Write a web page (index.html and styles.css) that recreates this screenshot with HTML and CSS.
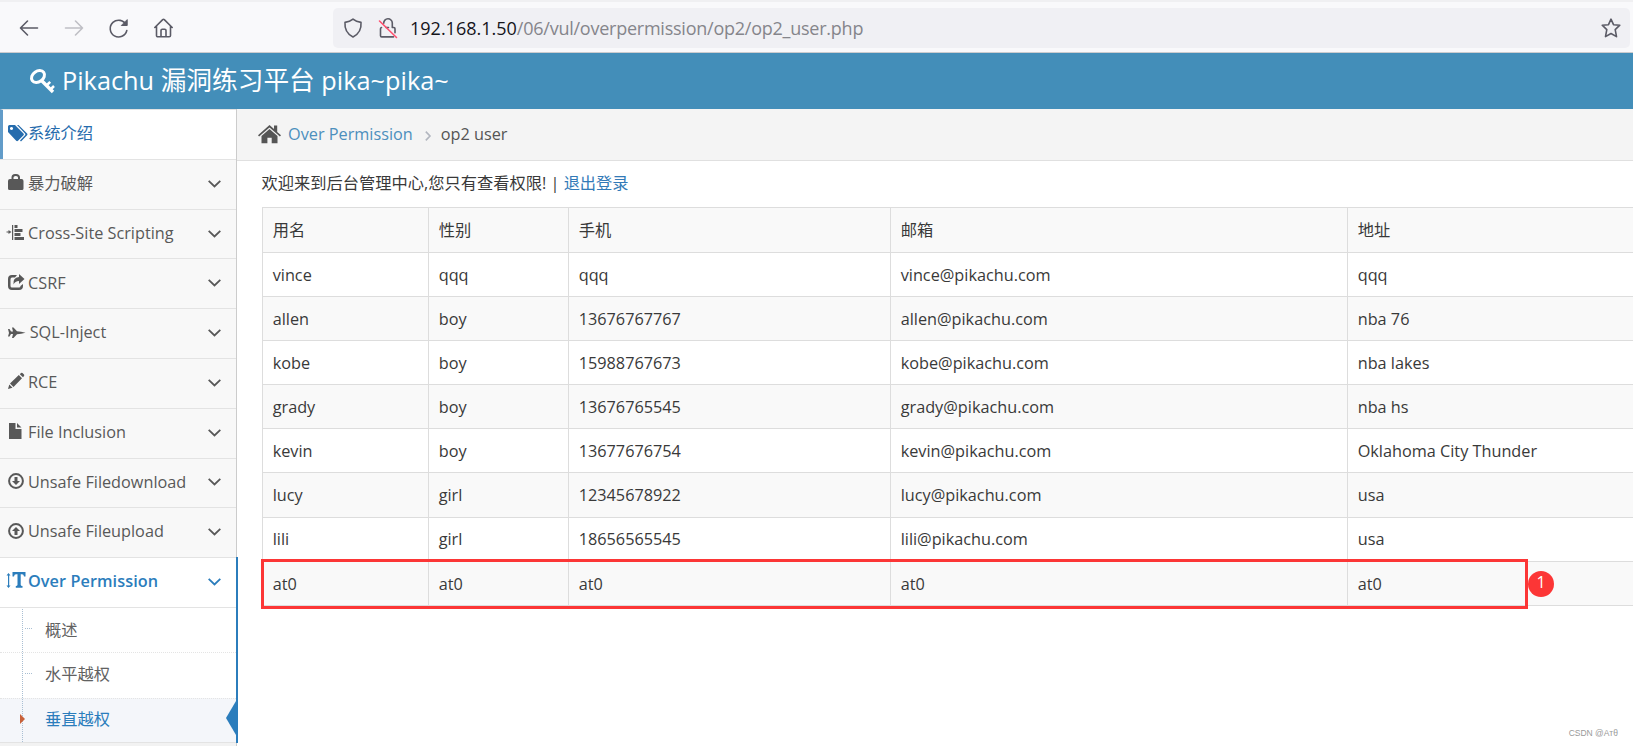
FILE: index.html
```html
<!DOCTYPE html>
<html lang="zh-CN">
<head>
<meta charset="utf-8">
<title>Pikachu</title>
<link rel="stylesheet" href="styles.css">
</head>
<body>
<div class="toolbar">
  <svg class="tool" viewBox="0 0 20 20"><path d="M18.500 10H2M8.500 3L1.500 10l7 7"/></svg>
  <svg class="tool dim" viewBox="0 0 20 20"><path d="M1.500 10h17M11.500 3l7 7-7 7"/></svg>
  <svg class="tool" viewBox="0 0 20 20"><path d="M17.200 7A8.400 8.400 0 1 0 17.800 12.500"/><path class="solid" d="M18.200 2v5.500h-5.500z"/></svg>
  <svg class="tool" viewBox="0 0 20 20"><path d="M.8 9.500L8.700 1.600q.8-.7 1.600 0l7.900 7.900M2.500 8.200v9.300a1.300 1.300 0 0 0 1.300 1.300h11.400a1.300 1.300 0 0 0 1.300-1.300V8.200M7 18.500v-6a1.200 1.200 0 0 1 1.200-1.200h2.600a1.200 1.200 0 0 1 1.200 1.200v6"/></svg>
  <div class="urlbar">
    <svg class="tool" viewBox="0 0 20 20"><path d="M10 1.200c2.400 2 5 2.800 8 3.200.5 6-1.800 11.500-8 14.600C3.800 15.900 1.500 10.400 2 4.400c3-.4 5.600-1.200 8-3.200z"/></svg>
    <svg class="tool lock" viewBox="0 0 20 20"><path d="M5.700 5.200A4.300 4.300 0 0 1 14.300 5v4.500h1.500a1.200 1.200 0 0 1 1.200 1.200v4M3.500 9.500A1.200 1.200 0 0 0 2.500 10.700v7a1.200 1.200 0 0 0 1.200 1.200H15.500M8 9.500h2.500"/><path class="slash" d="M1.500 3L18.500 19.500"/></svg>
    <span class="url"><b>192.168.1.50</b>/06/vul/overpermission/op2/op2_user.php</span>
    <svg class="tool star" viewBox="0 0 20 20"><path d="M10 1.200l2.500 5.500 6.300.5-4.600 4.400 1.300 7L10 15.500l-5.500 3.100 1.300-7L1.200 7.200l6.300-.5z"/></svg>
  </div>
</div>
<header class="brand">
  <svg class="key" viewBox="0 0 25 25"><g fill="none" stroke="#fff"><ellipse cx="8" cy="7.500" rx="7" ry="5.300" transform="rotate(-35 8 7.500)" stroke-width="3"/><path d="M11.500 11.500L23 23" stroke-width="3.400"/><path d="M16.500 16.500l3.700-3.700M20.500 20.500l3.500-3.500" stroke-width="2.500"/></g></svg>
  <span class="title">Pikachu <span class="cn">漏洞练习平台</span> pika~pika~</span>
</header>
<div class="body">
  <nav class="side">
    <a class="item intro"><svg class="ico" viewBox="0 0 20 17"><path d="M0 1.500Q0 0 1.500 0H7l8.500 8.500q.8.900 0 1.800L10 15.800q-.9.800-1.800 0L0 7zM3.500 1.900a1.600 1.600 0 1 0 .01 0z" fill-rule="evenodd"/><path d="M9 0h1.500l8.600 8.600q.9.800 0 1.700L13 16.400l-1-.9 5-5.200q.8-.8 0-1.700z"/></svg><span>系统介绍</span></a>
    <a class="item"><svg class="ico" viewBox="0 0 20 17"><path d="M0 7q0-2 2-2h1.500V3.500Q3.500 0 7 0h1q4 0 4 3.500V5h1.500q2 0 2 2v7.500q0 1.500-1.500 1.500H1.500Q0 16 0 14.500zM5.500 5H10V3.500Q10 2 8 2H7.500Q5.500 2 5.500 3.500z" fill-rule="evenodd"/></svg><span>暴力破解</span><svg class="chev" viewBox="0 0 13 8"><path d="M.7.800L6.500 6.500 12.300.8"/></svg></a>
    <a class="item"><svg class="ico" viewBox="0 0 20 17"><path d="M-1.500 7.400h2V6l3 2-3 2V8.500h-2zM4 1h1.200v15H4zM6.500 1h3v3h-3zM6.500 5h8v3h-8zM6.500 9h6v3h-6zM6.500 13H16v3H6.500z"/></svg><span>Cross-Site Scripting</span><svg class="chev" viewBox="0 0 13 8"><path d="M.7.800L6.500 6.500 12.300.8"/></svg></a>
    <a class="item"><svg class="ico" viewBox="0 0 20 17"><path d="M9 1H4Q0 1 0 5v7q0 4 4 4h7q4 0 4-4v-2l-2.500 2q0 1.500-1.500 1.500H4q-1.500 0-1.500-1.500V5.500Q2.500 3.500 4 3.500h3z"/><path d="M11 0l5.500 5-5.500 5V7Q7 7 5.500 10.500 4.500 3.500 11 3z"/></svg><span>CSRF</span><svg class="chev" viewBox="0 0 13 8"><path d="M.7.800L6.500 6.500 12.300.8"/></svg></a>
    <a class="item"><svg class="ico" viewBox="0 0 20 17"><path d="M0 5h1.500L3 7.500h2L4 3.500h1.500L9 7.300q4 .2 8.500 1.500Q13 10 9 10.200L5.500 14H4l1-4H3l-1.500 2.500H0L1 9z"/></svg><span>&#8202;SQL-Inject</span><svg class="chev" viewBox="0 0 13 8"><path d="M.7.800L6.500 6.500 12.300.8"/></svg></a>
    <a class="item"><svg class="ico" viewBox="0 0 20 17"><path d="M0 16l1.300-4.500 3.200 3.200zM2 10.500L10.800 2 14 5.200 5.500 14zM11.800 1.200L13 0q.8-.6 1.500 0L16 1.600q.6.700 0 1.400L15 4.300z"/></svg><span>RCE</span><svg class="chev" viewBox="0 0 13 8"><path d="M.7.800L6.500 6.500 12.300.8"/></svg></a>
    <a class="item"><svg class="ico" viewBox="0 0 20 17"><path d="M1 0h6.500v6H13.500v10H1zM9 0l4.500 4.500H9z"/></svg><span>File Inclusion</span><svg class="chev" viewBox="0 0 13 8"><path d="M.7.800L6.500 6.500 12.300.8"/></svg></a>
    <a class="item"><svg class="ico" viewBox="0 0 20 17"><circle cx="8" cy="8" r="6.900" fill="none" stroke="currentColor" stroke-width="2"/><path d="M6.500 4h3v4H12l-4 4-4-4h2.500z"/></svg><span>Unsafe Filedownload</span><svg class="chev" viewBox="0 0 13 8"><path d="M.7.800L6.500 6.500 12.300.8"/></svg></a>
    <a class="item"><svg class="ico" viewBox="0 0 20 17"><circle cx="8" cy="8" r="6.900" fill="none" stroke="currentColor" stroke-width="2"/><path d="M6.500 12h3V8H12L8 4 4 8h2.500z"/></svg><span>Unsafe Fileupload</span><svg class="chev" viewBox="0 0 13 8"><path d="M.7.800L6.500 6.500 12.300.8"/></svg></a>
    <div class="group">
      <a class="item open"><svg class="ico" viewBox="0 0 20 17"><path d="M.5 1L2.500 3.500H1.200v10h1.300L.5 16l-2-2.500H0v-10h-1.500z"/><path d="M4.500 0H17.500v4.500H16Q15.800 2.300 14 2.300h-1.300v10.500q0 1.200 1.800 1.200v1.800H7.800V14q1.700 0 1.700-1.200V2.300H8Q6.200 2.300 6 4.500H4.500z"/></svg><span>Over Permission</span><svg class="chev" viewBox="0 0 13 8"><path d="M.7.800L6.500 6.500 12.300.8"/></svg></a>
      <div class="sub">
        <a class="leaf">概述</a>
        <a class="leaf">水平越权</a>
        <a class="leaf current">垂直越权</a>
      </div>
    </div>
  </nav>
  <main class="main">
    <div class="crumbs">
      <svg class="house" viewBox="0 0 23 19"><path d="M11.500 0L16 4V.5h3.200V7L23 10.300l-1.100 1.300L11.500 2.500 1.100 11.600 0 10.300z"/><path d="M11.500 4l8 7v7.300h-5.800v-5.500H9.400v5.500H3.500V11z"/></svg>
      <a>Over Permission</a>
      <svg class="sep" viewBox="0 0 6 10"><path d="M.8.600L5 5 .8 9.400"/></svg>
      <span>op2 user</span>
    </div>
    <p class="welcome">欢迎来到后台管理中心,您只有查看权限! | <a>退出登录</a></p>
    <div class="tablewrap">
      <table>
        <colgroup><col class="c1"><col class="c2"><col class="c3"><col class="c4"><col class="c5"></colgroup>
        <tr class="head"><td>用名</td><td>性别</td><td>手机</td><td>邮箱</td><td>地址</td></tr>
        <tr><td>vince</td><td>qqq</td><td>qqq</td><td>vince@pikachu.com</td><td>qqq</td></tr>
        <tr><td>allen</td><td>boy</td><td>13676767767</td><td>allen@pikachu.com</td><td>nba 76</td></tr>
        <tr><td>kobe</td><td>boy</td><td>15988767673</td><td>kobe@pikachu.com</td><td>nba lakes</td></tr>
        <tr><td>grady</td><td>boy</td><td>13676765545</td><td>grady@pikachu.com</td><td>nba hs</td></tr>
        <tr><td>kevin</td><td>boy</td><td>13677676754</td><td>kevin@pikachu.com</td><td>Oklahoma City Thunder</td></tr>
        <tr><td>lucy</td><td>girl</td><td>12345678922</td><td>lucy@pikachu.com</td><td>usa</td></tr>
        <tr><td>lili</td><td>girl</td><td>18656565545</td><td>lili@pikachu.com</td><td>usa</td></tr>
        <tr class="last"><td>at0</td><td>at0</td><td>at0</td><td>at0</td><td>at0</td></tr>
      </table>
      <div class="mark"></div>
      <div class="num">1</div>
    </div>
    <div class="credit">CSDN @Aтθ</div>
  </main>
</div>
</body>
</html>
```
FILE: styles.css
```css
* { box-sizing: border-box; }
body { margin: 0; width: 1633px; height: 746px; overflow: hidden; background: #fff; color: #393939; font: 16.250px/24px "Open Sans", "Noto Sans CJK SC", sans-serif; }
svg { display: block; flex: none; overflow: visible; }

.toolbar { height: 53px; display: flex; align-items: center; padding: 2px 3px 0 19px; background: #f9f9fb; border-top: 2px solid #f0f0f2; border-bottom: 1px solid #cccccf; }
.tool { width: 20px; height: 20px; margin-right: 25px; fill: none; stroke: #5b5b66; stroke-width: 1.6; stroke-linecap: round; stroke-linejoin: round; }
.tool.dim { stroke: #bfbfc5; }
.solid { fill: #5b5b66; stroke-width: 1; }
.urlbar { flex: 1; height: 40px; display: flex; align-items: center; margin-left: 134px; padding-left: 10px; border-radius: 5px; background: #f0f0f4; }
.urlbar .tool { margin-right: 15px; }
.urlbar .tool.lock { margin-right: 12px; }
.slash { stroke: #ff4f6e; }
.url { flex: 1; margin-top: -1px; font: 18px/24px "Open Sans", sans-serif; letter-spacing: -.24px; color: #85858b; white-space: nowrap; }
.url b { font-weight: 400; letter-spacing: 0; color: #15141a; }
.urlbar .star { margin-right: 9px; }

.brand { height: 56px; display: flex; align-items: center; padding-left: 30px; background: #438eb9; color: #fff; }
.key { width: 25px; height: 25px; margin-right: 7px; }
.title { margin-top: -2px; font-size: 25.300px; line-height: 56px; white-space: nowrap; }
.cn { font-size: 25.700px; }

.body { display: flex; height: 637px; }
.side { width: 237px; flex: none; padding-top: .2px; background: #f2f2f2; border-right: 1px solid #ccc; }
.item { height: 49.77px; display: flex; align-items: center; padding: 0 15px 0 8px; background: #f8f8f8; border-top: 1px solid #e3e3e3; color: #585858; white-space: nowrap; }
.ico { width: 20px; height: 17px; fill: currentColor; margin-top: -3px; }
.item span { margin-top: -2.500px; }
.chev { width: 13px; height: 8px; margin-left: auto; margin-top: -1px; fill: none; stroke: currentColor; stroke-width: 1.8; }
.intro { background: #fff; color: #266cad; border-left: 3px solid #629cc9; padding-left: 5px; }
.group { position: relative; width: 238px; border-right: 2px solid #2b7dbc; }
.open { background: #fff; color: #2b7dbc; font-weight: 600; padding-right: 15px; }
.open span { letter-spacing: .07px; }
.sub { position: relative; height: 136.500px; border-top: 1px solid #e3e3e3; border-bottom: 1px solid #e3e3e3; background: #fff; }
.sub::before { content: ""; position: absolute; z-index: 1; left: 22px; top: 1px; bottom: 0; border-left: 1px dotted #a9bfd3; }
.leaf { position: relative; display: block; height: 45.400px; padding-left: 45px; line-height: 42px; border-top: 1px dotted #e4e4e4; color: #616161; }
.leaf:first-child { height: 44.400px; line-height: 44px; border-top: 0; }
.leaf::before { content: ""; position: absolute; left: 25px; top: 20px; width: 7px; border-top: 1px dotted #a9bfd3; }
.current { height: 44.700px; line-height: 40px; background: #f4f6fa; color: #2b7dbc; }
.current::before { z-index: 2; left: 20px; top: 15px; width: 0; border: 5px solid transparent; border-left-color: #c86139; border-right: 0; }
.current::after { content: ""; position: absolute; right: 0; top: 2px; border: 17px solid transparent; border-right: 10px solid #2b7dbc; border-left: 0; }

.main { position: relative; flex: 1; min-width: 0; overflow: hidden; }
.crumbs { height: 52px; display: flex; align-items: center; padding: 0 0 1px 21px; background: #f4f4f4; border-bottom: 1px solid #e0e0e0; color: #555; }
.crumbs a { color: #4c8fbd; }
.house { width: 23px; height: 19px; fill: #555; margin-right: 7px; }
.sep { width: 6px; height: 10px; margin: 4px 10px 0 12px; fill: none; stroke: #b2b6bf; stroke-width: 1.600; }
.welcome { margin: 0; padding: 10px 0 0 24.500px; height: 46px; white-space: nowrap; }
.welcome a { color: #337ab7; }
.tablewrap { position: relative; margin-left: 25px; }
table { width: 1490px; table-layout: fixed; border-collapse: separate; border-spacing: 0; border-left: 1px solid #ddd; border-top: 1px solid #ddd; }
.c1 { width: 166px; } .c2 { width: 140px; } .c3 { width: 322px; } .c4 { width: 457px; } .c5 { width: 404px; }
td { height: 44.100px; padding: 0 9.700px; border-right: 1px solid #ddd; border-bottom: 1px solid #ddd; white-space: nowrap; }
.head td { height: 45px; }
.last td { padding-top: 1px; }
tr:nth-child(odd) { background: #f9f9f9; }
.mark { position: absolute; left: -1px; top: 352px; width: 1267px; height: 50px; border: 3px solid #fc3636; }
.num { position: absolute; left: 1266px; top: 364px; width: 26px; height: 26px; border-radius: 50%; background: #fc3636; color: #fff; text-align: center; font: 16px/23px "Open Sans", sans-serif; }
.credit { position: absolute; right: 15px; bottom: 5px; font: 8.500px/16px "Liberation Sans", sans-serif; color: #999; }
```
